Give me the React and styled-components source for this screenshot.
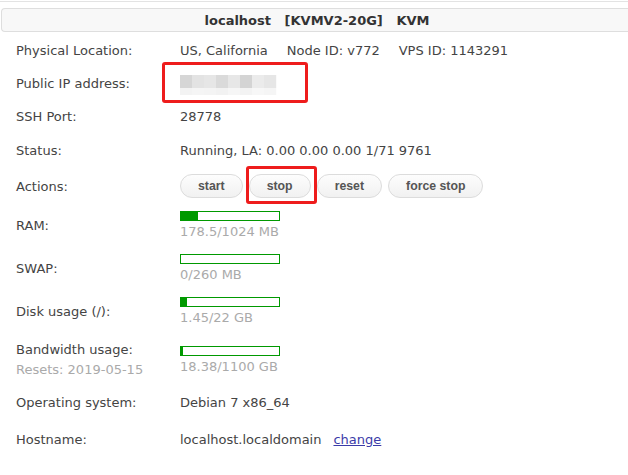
import styled, { createGlobalStyle } from 'styled-components';

const GlobalStyle = createGlobalStyle`
  html, body {
    margin: 0;
    padding: 0;
    background: #fff;
    overflow: hidden;
  }
  body {
    font-family: "DejaVu Sans", Verdana, sans-serif;
    font-size: 13px;
    color: #444;
  }
`;

const Page = styled.div`
  width: 628px;
  margin-top: 1px;
  border-top: 1px solid #e3e3e3;
  overflow: hidden;
`;

const TitleBar = styled.div`
  width: 630px;
  height: 22px;
  margin: 6px 0 2px 1px;
  background: #f8f8f8;
  border: 1px solid #dedede;
  border-right: none;
  border-radius: 4px 0 0 4px;
  display: flex;
  align-items: center;
  justify-content: center;
  font-weight: bold;
  color: #333;
  white-space: pre;
`;

const Row = styled.div`
  display: grid;
  grid-template-columns: 164px 1fr;
  align-items: center;
  padding: ${(p) => p.$pt ?? 8}px 0 ${(p) => p.$pb ?? 8}px 16px;
  line-height: 17px;
`;

const Label = styled.div`
  color: #444;
  line-height: ${(p) => (p.$tall ? '20px' : '17px')};
`;

const Sub = styled.div`
  color: #aaa;
`;

const Value = styled.div`
  display: flex;
  align-items: center;
  gap: ${(p) => p.$gap ?? 0}px;
  color: #444;
  white-space: nowrap;
`;

const Meter = styled.div`
  display: flex;
  flex-direction: column;
`;

const Bar = styled.div`
  width: 98px;
  height: 8px;
  border: 1px solid #009900;
  background: #fff;
`;

const Fill = styled.div`
  height: 100%;
  background: #009900;
`;

const MeterText = styled.div`
  margin-top: 2px;
  color: #aaa;
  line-height: 17px;
`;

const Actions = styled.div`
  display: flex;
  gap: 6px;
`;

const Button = styled.button`
  height: 24px;
  padding: 0 17px;
  border: 1px solid #dcdcdc;
  border-radius: 12px;
  background: linear-gradient(#fdfdfd, #f1f1f1);
  font-family: "Liberation Sans", Arial, sans-serif;
  font-weight: bold;
  font-size: 12.3px;
  color: #555;
  cursor: pointer;
`;

const Marked = styled.span`
  position: relative;
  display: inline-flex;
  align-items: flex-start;
  height: ${(p) => (p.$h ? `${p.$h}px` : 'auto')};
`;

const RedBox = styled.span`
  position: absolute;
  top: ${(p) => p.$t}px;
  right: ${(p) => p.$r}px;
  bottom: ${(p) => p.$b}px;
  left: ${(p) => p.$l}px;
  border: 3px solid #ee1c1c;
  border-radius: 3px;
  pointer-events: none;
`;

const Link = styled.a`
  color: #3b3ba8;
  text-decoration: underline;
  cursor: pointer;
`;

// pixelated blur where the IP address was masked
const shades = ['#d6d6d6', '#e3e3e3', '#e6e6e6', '#dadada', '#e7e7e7', '#d4d4d4', '#ebebeb', '#e6e6e6'];
const lower = ['#f3f3f3', '#f5f5f5', '#f4f4f4', '#f2f2f2', '#f6f6f6', '#f3f3f3', '#f7f7f7', '#f5f5f5'];

const MaskedIp = () => (
  <svg width="98" height="20" viewBox="0 0 98 20" style={{ flexShrink: 0 }}>
    {shades.map((c, i) => (
      <rect key={'a' + i} x={i * 12} y="0" width="12.2" height="13" fill={c} />
    ))}
    {lower.map((c, i) => (
      <rect key={'b' + i} x={i * 12} y="13" width="12.2" height="7" fill={c} />
    ))}
  </svg>
);

const Usage = ({ used, total, unit }) => {
  const pct = used > 0 ? Math.max((used / total) * 100, 2) : 0;
  return (
    <Meter>
      <Bar>
        <Fill style={{ width: `${pct}%` }} />
      </Bar>
      <MeterText>{used}/{total} {unit}</MeterText>
    </Meter>
  );
};

export default function App() {
  return (
    <>
      <GlobalStyle />
      <Page>
        <TitleBar>{'localhost   [KVMV2-20G]   KVM'}</TitleBar>

        <Row>
          <Label>Physical Location:</Label>
          <Value $gap={19}>
            <span>US, California</span>
            <span>Node ID: v772</span>
            <span>VPS ID: 1143291</span>
          </Value>
        </Row>

        <Row>
          <Label>Public IP address:</Label>
          <Value>
            <Marked $h={17}>
              <MaskedIp />
              <RedBox $t={-13} $r={-30} $b={-11} $l={-18} />
            </Marked>
          </Value>
        </Row>

        <Row>
          <Label>SSH Port:</Label>
          <Value>28778</Value>
        </Row>

        <Row $pt={9}>
          <Label>Status:</Label>
          <Value>Running, LA: 0.00 0.00 0.00 1/71 9761</Value>
        </Row>

        <Row $pt={7}>
          <Label>Actions:</Label>
          <Actions>
            <Button>start</Button>
            <Marked>
              <Button>stop</Button>
              <RedBox $t={-8} $r={-6} $b={-6} $l={-3} />
            </Marked>
            <Button>reset</Button>
            <Button>force stop</Button>
          </Actions>
        </Row>

        <Row $pt={5} $pb={9}>
          <Label>RAM:</Label>
          <Usage used={178.5} total={1024} unit="MB" />
        </Row>

        <Row $pt={5} $pb={9}>
          <Label>SWAP:</Label>
          <Usage used={0} total={260} unit="MB" />
        </Row>

        <Row $pt={5} $pb={9}>
          <Label>Disk usage (/):</Label>
          <Usage used={1.45} total={22} unit="GB" />
        </Row>

        <Row $pt={5} $pb={6}>
          <Label $tall>
            Bandwidth usage:
            <Sub>Resets: 2019-05-15</Sub>
          </Label>
          <Usage used={18.38} total={1100} unit="GB" />
        </Row>

        <Row $pb={10}>
          <Label>Operating system:</Label>
          <Value>Debian 7 x86_64</Value>
        </Row>

        <Row $pt={10}>
          <Label>Hostname:</Label>
          <Value $gap={12}>
            <span>localhost.localdomain</span>
            <Link>change</Link>
          </Value>
        </Row>
      </Page>
    </>
  );
}
